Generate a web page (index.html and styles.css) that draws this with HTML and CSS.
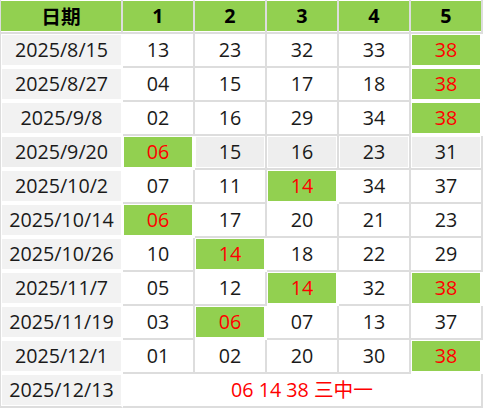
FILE: index.html
```html
<!DOCTYPE html>
<html lang="zh">
<head>
<meta charset="utf-8">
<link rel="stylesheet" href="styles.css">
</head>
<body>
<table class="lotto">
  <thead>
    <tr>
      <th class="date"><div>日期</div></th>
      <th><div>1</div></th>
      <th><div>2</div></th>
      <th><div>3</div></th>
      <th><div>4</div></th>
      <th><div>5</div></th>
    </tr>
  </thead>
  <tbody>
    <tr><td class="date"><div>2025/8/15</div></td><td><div>13</div></td><td><div>23</div></td><td><div>32</div></td><td><div>33</div></td><td class="hit"><div>38</div></td></tr>
    <tr><td class="date"><div>2025/8/27</div></td><td><div>04</div></td><td><div>15</div></td><td><div>17</div></td><td><div>18</div></td><td class="hit"><div>38</div></td></tr>
    <tr><td class="date"><div>2025/9/8</div></td><td><div>02</div></td><td><div>16</div></td><td><div>29</div></td><td><div>34</div></td><td class="hit"><div>38</div></td></tr>
    <tr class="shade"><td class="date"><div>2025/9/20</div></td><td class="hit"><div>06</div></td><td><div>15</div></td><td><div>16</div></td><td><div>23</div></td><td><div>31</div></td></tr>
    <tr><td class="date"><div>2025/10/2</div></td><td><div>07</div></td><td><div>11</div></td><td class="hit"><div>14</div></td><td><div>34</div></td><td><div>37</div></td></tr>
    <tr><td class="date"><div>2025/10/14</div></td><td class="hit"><div>06</div></td><td><div>17</div></td><td><div>20</div></td><td><div>21</div></td><td><div>23</div></td></tr>
    <tr><td class="date"><div>2025/10/26</div></td><td><div>10</div></td><td class="hit"><div>14</div></td><td><div>18</div></td><td><div>22</div></td><td><div>29</div></td></tr>
    <tr><td class="date"><div>2025/11/7</div></td><td><div>05</div></td><td><div>12</div></td><td class="hit"><div>14</div></td><td><div>32</div></td><td class="hit"><div>38</div></td></tr>
    <tr><td class="date"><div>2025/11/19</div></td><td><div>03</div></td><td class="hit"><div>06</div></td><td><div>07</div></td><td><div>13</div></td><td><div>37</div></td></tr>
    <tr><td class="date"><div>2025/12/1</div></td><td><div>01</div></td><td><div>02</div></td><td><div>20</div></td><td><div>30</div></td><td class="hit"><div>38</div></td></tr>
    <tr class="last"><td class="date"><div>2025/12/13</div></td><td colspan="5" class="result"><div>06 14 38 三中一</div></td></tr>
  </tbody>
</table>
</body>
</html>
```

FILE: styles.css
```css
html, body {
  margin: 0;
  padding: 0;
  background: #ffffff;
}

body {
  font-family: "Open Sans", "Noto Sans CJK SC", sans-serif;
  color: #1a1a1a;
}

.lotto {
  border-collapse: separate;
  border-spacing: 0;
  border-left: 1px solid #dddddd;
  table-layout: fixed;
  width: 483px;
}

.lotto th,
.lotto td {
  padding: 0;
  width: 70px;
  height: 32px;
  border-right: 2px solid #dddddd;
  border-bottom: 2px solid #dddddd;
  background: #ffffff;
}

.lotto th.date,
.lotto td.date {
  width: 120px;
}

.lotto th > div,
.lotto td > div {
  height: 30px;
  margin: 1px;
  display: flex;
  align-items: center;
  justify-content: center;
  font-size: 19.7px;
  line-height: 1;
  white-space: nowrap;
}

.lotto th > div {
  background: #92d050;
  font-weight: bold;
  color: #000000;
  margin: 1px 0;
}

.lotto th.date > div {
  font-family: "Noto Sans CJK SC", sans-serif;
}

.lotto td.date {
  border-right-color: #ffffff;
  border-bottom-color: #ffffff;
}

.lotto td.date > div {
  background: #f2f2f2;
  margin: 1px 0 1px 1px;
}

.lotto tr.shade td > div {
  background: #eeeeee;
}

.lotto td.hit {
  border-right-color: #ffffff;
  border-bottom-color: #ffffff;
}

.lotto td.hit > div,
.lotto tr.shade td.hit > div {
  background: #92d050;
  color: #ff0000;
}

.lotto tr.last td.date {
  border-bottom-color: #dddddd;
}

.lotto td.result {
  width: auto;
}

.lotto td.result > div {
  color: #ff0000;
}
```
